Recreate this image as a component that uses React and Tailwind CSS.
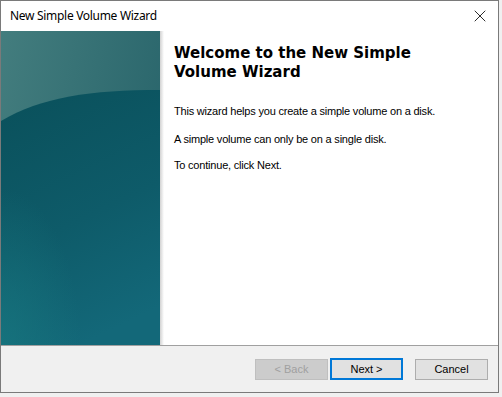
import { X } from "lucide-react";

function SidePanel() {
  return (
    <svg width="159" height="314" viewBox="0 0 159 314" className="block">
      <defs>
        <linearGradient id="top" x1="0" y1="0" x2="1" y2="0.4">
          <stop offset="0" stopColor="#437d7e" />
          <stop offset="1" stopColor="#2a666c" />
        </linearGradient>
        <linearGradient id="body" x1="0.2" y1="0" x2="0.5" y2="1">
          <stop offset="0" stopColor="#0a515c" />
          <stop offset="0.55" stopColor="#0e5b69" />
          <stop offset="1" stopColor="#136879" />
        </linearGradient>
        <radialGradient id="glow" cx="0" cy="1" r="0.5">
          <stop offset="0" stopColor="#187880" stopOpacity="0.7" />
          <stop offset="1" stopColor="#187880" stopOpacity="0" />
        </radialGradient>
      </defs>
      <rect width="159" height="314" fill="url(#top)" />
      <path d="M0 90 C 40 66, 90 59, 159 59 L159 314 L0 314 Z" fill="url(#body)" />
      <rect width="159" height="314" fill="url(#glow)" />
    </svg>
  );
}

export default function App() {
  return (
    <div className="w-[502px] h-[397px] bg-[#f0f0f0] overflow-hidden">
      <div className="w-[499px] h-[393px] border border-[#7a7a7a] bg-white flex flex-col">
        {/* title bar */}
        <div className="h-[30px] flex items-center justify-between pl-[9px] pr-[8px] shrink-0">
          <span className="text-[12px] tracking-[-0.3px] text-black" style={{ fontFamily: '"Noto Sans", sans-serif' }}>
            New Simple Volume Wizard
          </span>
          <X size={20} strokeWidth={1} className="text-black" />
        </div>

        {/* main */}
        <div className="flex h-[314px] shrink-0">
          <div className="w-[159px] shrink-0">
            <SidePanel />
          </div>
          <div className="w-[4px] bg-gradient-to-r from-[#d2d2d2] to-white shrink-0" />
          <div className="flex-1 pl-[10px] pt-[13px] text-black" style={{ fontFamily: '"Liberation Sans", Arial, sans-serif' }}>
            <h1 className="text-[15px] leading-[19px] font-bold w-[250px]" style={{ fontFamily: '"DejaVu Sans", Verdana, sans-serif' }}>
              Welcome to the New Simple Volume Wizard
            </h1>
            <p className="text-[11px] tracking-[-0.2px] mt-[21px]">This wizard helps you create a simple volume on a disk.</p>
            <p className="text-[11px] tracking-[-0.2px] mt-[11px]">A simple volume can only be on a single disk.</p>
            <p className="text-[11px] tracking-[-0.2px] mt-[10px]">To continue, click Next.</p>
          </div>
        </div>

        {/* footer */}
        <div className="flex-1 border-t border-[#a0a0a0] bg-[#f0f0f0] flex items-start pt-[13px] pr-[10px] justify-end text-[11px]" style={{ fontFamily: '"Liberation Sans", Arial, sans-serif' }}>
          <button className="w-[73px] h-[21px] bg-[#cccccc] border border-[#bfbfbf] text-[#a0a0a0]">&lt; Back</button>
          <button className="w-[73px] h-[22px] ml-[2px] -mt-[1px] bg-[#e1e1e1] border-2 border-[#0078d7] text-black">Next &gt;</button>
          <button className="w-[73px] h-[21px] ml-[12px] bg-[#e1e1e1] border border-[#adadad] text-black">Cancel</button>
        </div>
      </div>
    </div>
  );
}
